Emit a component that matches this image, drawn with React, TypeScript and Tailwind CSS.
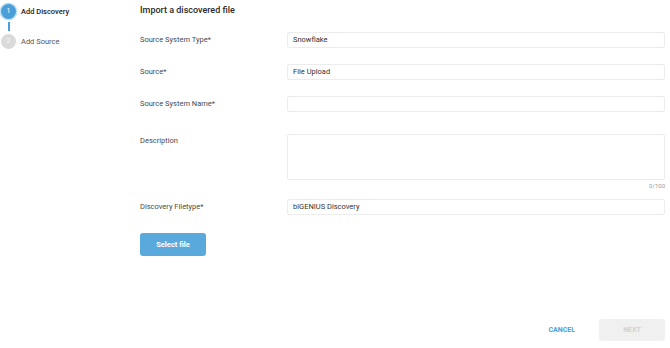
import { useState } from 'react';

const steps = [
  { n: 1, label: 'Add Discovery', active: true },
  { n: 2, label: 'Add Source', active: false },
];

const Field = ({ label, value }: { label: string; value?: string }) => (
  <div className="flex items-center h-[16px]">
    <div className="w-[147px] text-[7.5px] text-[#4a4a4a]">{label}</div>
    <div className="flex-1 h-[16px] border border-[#ececec] rounded-[2px] flex items-center px-[5px] text-[7.5px] text-[#333]">
      {value}
    </div>
  </div>
);

export default function App() {
  const [desc] = useState('');

  return (
    <div
      className="w-[670px] h-[348px] bg-white flex"
      style={{ fontFamily: 'Roboto, "Liberation Sans", sans-serif' }}
    >
      {/* Stepper */}
      <div className="w-[140px] pt-[4px] pl-[1px]">
        {steps.map((s, i) => (
          <div key={s.n}>
            {i > 0 && <div className="ml-[7px] w-[2px] h-[9px] bg-[#4a9fd8] my-[3px]" />}
            <div className="flex items-center gap-[5px]">
              <div
                className={`w-[15px] h-[15px] rounded-full flex items-center justify-center text-[7px] ${
                  s.active
                    ? 'bg-[#4a9fd8] text-white ring-[1.5px] ring-[#bfe0f5]'
                    : 'bg-[#dadada] text-[#f6f6f6]'
                }`}
              >
                {s.n}
              </div>
              <span className={`text-[7.5px] ${s.active ? 'font-medium text-[#222]' : 'text-[#555]'}`}>
                {s.label}
              </span>
            </div>
          </div>
        ))}
      </div>

      {/* Form */}
      <div className="flex-1 pr-[5px] flex flex-col">
        <h1 className="text-[9px] font-medium text-[#2a2a2a] mt-[4px] h-[12px] leading-[12px]">
          Import a discovered file
        </h1>
        <div className="mt-[16px] flex flex-col gap-[16px]">
          <Field label="Source System Type*" value="Snowflake" />
          <Field label="Source*" value="File Upload" />
          <Field label="Source System Name*" />
        </div>
        <div className="mt-[22px] flex">
          <div className="w-[147px] text-[7.5px] text-[#4a4a4a] pt-[1px]">Description</div>
          <div className="flex-1 flex flex-col">
            <div className="h-[46px] border border-[#ececec] rounded-[2px] text-[7.5px]">{desc}</div>
            <div className="text-right text-[6px] text-[#999] mt-[1px]">{desc.length}/100</div>
          </div>
        </div>
        <div className="mt-[9px]">
          <Field label="Discovery Filetype*" value="biGENIUS Discovery" />
        </div>
        <button className="mt-[18px] w-[66px] h-[23px] rounded-[3px] bg-[#5aa9dc] text-white text-[7.5px] font-bold">
          Select file
        </button>
        <div className="mt-auto mb-[7px] flex justify-end items-center gap-[24px]">
          <span className="text-[7px] font-bold text-[#4a9fd8]">CANCEL</span>
          <button className="w-[66px] h-[22px] rounded-[3px] bg-[#f0f0f0] text-[#d0d0d0] text-[7px] font-bold">
            NEXT
          </button>
        </div>
      </div>
    </div>
  );
}
